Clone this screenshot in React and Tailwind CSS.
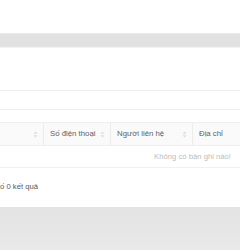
import React from 'react';

function SortIcon() {
  return (
    <svg width="5" height="7" viewBox="0 0 5 7" className="shrink-0">
      <path d="M2.5 0.5 L4.5 2.7 L0.5 2.7 Z" fill="#dcdcdc" />
      <path d="M2.5 6.5 L4.5 4.3 L0.5 4.3 Z" fill="#dcdcdc" />
    </svg>
  );
}

const columns = [
  { label: '', width: 'w-[44px]' },
  { label: 'Số điện thoại', width: 'w-[67px]' },
  { label: 'Người liên hệ', width: 'w-[82px]' },
  { label: 'Địa chỉ', width: 'flex-1', noSort: true },
];

export default function App() {
  return (
    <div className="w-[240px] h-[250px] flex flex-col overflow-hidden bg-white font-['Liberation_Sans',Arial,sans-serif]">
      <div className="h-[33px] bg-white" />
      <div className="h-[15px] bg-[#e2e2e2] border-t border-t-[#e9e9e9] border-b border-b-[#f3f3f3]" />

      <div className="h-[159px] bg-white flex flex-col">
        <div className="h-[42px]" />
        <div className="h-[20px] border-t border-b border-[#efefef]" />
        <div className="h-[12px]" />

        <div className="h-[24px] flex bg-[#fafafa] border-t border-b border-[#efefef]">
          {columns.map((col, i) => (
            <div
              key={i}
              className={`${col.width} flex items-center justify-between pl-[6px] pr-[5px] ${i < columns.length - 1 ? 'border-r border-[#ececec]' : ''}`}
            >
              <span className="text-[7.8px] text-[#5f5f5f] whitespace-nowrap">{col.label}</span>
              {!col.noSort && <SortIcon />}
            </div>
          ))}
        </div>

        <div className="h-[22px] flex items-center justify-end pr-[9px] border-b border-[#f2f2f2]">
          <span className="text-[7.7px] text-[#bdbdbd] whitespace-nowrap">Không có bản ghi nào!</span>
        </div>

        <div className="h-[37px] flex items-center">
          <span className="text-[7.7px] text-[#595959] whitespace-nowrap">ố 0 kết quả</span>
        </div>
      </div>

      <div className="flex-1 bg-gradient-to-b from-[#e3e3e3] to-[#e9e9e9]" />
    </div>
  );
}
